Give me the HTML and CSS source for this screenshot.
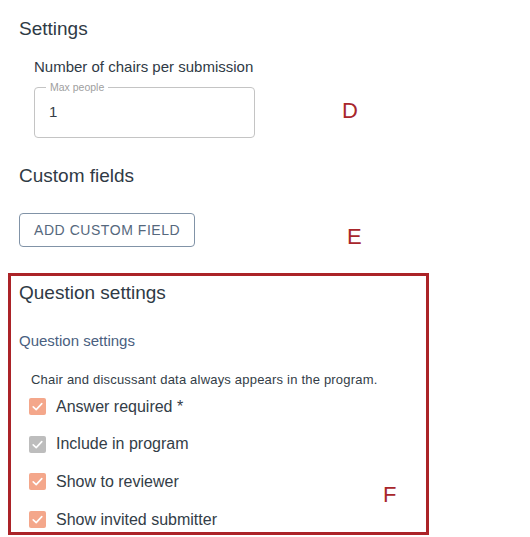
FILE: index.html
```html
<!DOCTYPE html>
<html lang="en">
<head>
<meta charset="utf-8">
<title>Settings</title>
<link rel="stylesheet" href="styles.css">
</head>
<body>
<div class="page">
  <section class="section">
    <h2 class="heading">Settings</h2>
    <div class="field-group">
      <div class="field-title">Number of chairs per submission</div>
      <div class="field-row">
        <div class="outlined">
          <span class="outlined-label">Max people</span>
          <div class="outlined-value">1</div>
        </div>
        <span class="marker marker-d">D</span>
      </div>
    </div>
  </section>

  <section class="section section-custom">
    <h2 class="heading">Custom fields</h2>
    <div class="button-row">
      <button class="btn-outline" type="button">ADD CUSTOM FIELD</button>
      <span class="marker marker-e">E</span>
    </div>
  </section>

  <section class="highlight">
    <h2 class="heading">Question settings</h2>
    <div class="subheading">Question settings</div>
    <p class="note">Chair and discussant data always appears in the program.</p>
    <ul class="checks">
      <li class="check-row">
        <span class="cb cb-orange"><svg viewBox="0 0 17 17" width="17" height="17"><path d="M4.2 8.8 L7.2 11.6 L12.8 5.6" fill="none" stroke="#fff" stroke-width="1.6" stroke-linecap="round" stroke-linejoin="round"/></svg></span>
        <span class="check-label">Answer required *</span>
      </li>
      <li class="check-row">
        <span class="cb cb-gray"><svg viewBox="0 0 17 17" width="17" height="17"><path d="M4.2 8.8 L7.2 11.6 L12.8 5.6" fill="none" stroke="#fff" stroke-width="1.6" stroke-linecap="round" stroke-linejoin="round"/></svg></span>
        <span class="check-label">Include in program</span>
      </li>
      <li class="check-row">
        <span class="cb cb-orange"><svg viewBox="0 0 17 17" width="17" height="17"><path d="M4.2 8.8 L7.2 11.6 L12.8 5.6" fill="none" stroke="#fff" stroke-width="1.6" stroke-linecap="round" stroke-linejoin="round"/></svg></span>
        <span class="check-label">Show to reviewer</span>
      </li>
      <li class="check-row">
        <span class="cb cb-orange"><svg viewBox="0 0 17 17" width="17" height="17"><path d="M4.2 8.8 L7.2 11.6 L12.8 5.6" fill="none" stroke="#fff" stroke-width="1.6" stroke-linecap="round" stroke-linejoin="round"/></svg></span>
        <span class="check-label">Show invited submitter</span>
      </li>
    </ul>
    <span class="marker marker-f">F</span>
  </section>
</div>
</body>
</html>
```

FILE: styles.css
```css
* { box-sizing: border-box; }

html, body {
  margin: 0;
  padding: 0;
  background: #ffffff;
}

body {
  font-family: "Liberation Sans", Arial, sans-serif;
  color: #333d47;
}

.page {
  width: 530px;
  padding: 17px 8px 0 8px;
}

.section {
  padding-left: 11px;
}

.heading {
  margin: 0;
  font-size: 19px;
  line-height: 24px;
  font-weight: 400;
  color: #2f3a45;
}

.field-group {
  margin-top: 16px;
  padding-left: 15px;
}

.field-title {
  font-size: 15px;
  line-height: 20px;
  color: #2f3a45;
}

.field-row {
  display: flex;
  align-items: flex-start;
  margin-top: 10px;
}

.outlined {
  position: relative;
  width: 221px;
  height: 51px;
  border: 1px solid #c4c4c4;
  border-radius: 4px;
  padding: 14px 14px 0 14px;
}

.outlined-label {
  position: absolute;
  left: 11px;
  top: -8px;
  padding: 0 4px;
  background: #ffffff;
  font-size: 10.5px;
  line-height: 14px;
  color: #a0a0a0;
}

.outlined-value {
  font-size: 15px;
  line-height: 20px;
  color: #333d47;
}

.marker {
  font-size: 22px;
  line-height: 26px;
  color: #a8262b;
}

.marker-d {
  margin-left: 87px;
  margin-top: 11px;
}

.section-custom {
  margin-top: 26px;
}

.button-row {
  display: flex;
  align-items: flex-start;
  height: 34px;
  margin-top: 25px;
}

.btn-outline {
  width: 176px;
  height: 34px;
  padding: 6px 0 6px 14px;
  text-align: left;
  border: 1px solid #8193a7;
  border-radius: 4px;
  background: #ffffff;
  font-family: "Liberation Sans", Arial, sans-serif;
  font-size: 14px;
  line-height: 20px;
  letter-spacing: 0.55px;
  color: #55687d;
  cursor: pointer;
}

.marker-e {
  margin-left: 152px;
  margin-top: 11px;
}

.highlight {
  position: relative;
  margin-top: 26px;
  width: 421px;
  height: 262px;
  border: 3px solid #ab2328;
  padding: 5px 8px 0 8px;
  overflow: hidden;
}

.subheading {
  margin-top: 26px;
  font-size: 15px;
  line-height: 20px;
  color: #4a6080;
}

.note {
  margin: 21px 0 0 12px;
  font-size: 13px;
  line-height: 16px;
  letter-spacing: 0.2px;
  color: #333d47;
}

.checks {
  list-style: none;
  margin: 0;
  padding: 0 0 0 10px;
}

.check-row {
  display: flex;
  align-items: center;
  height: 37.6px;
  gap: 10px;
}

.cb {
  display: block;
  width: 17px;
  height: 17px;
  border-radius: 2px;
}

.cb svg {
  display: block;
}

.cb-orange {
  background: #f4a78b;
}

.cb-gray {
  background: #bdbdbd;
}

.check-label {
  font-size: 16px;
  line-height: 20px;
  color: #333d47;
}

.marker-f {
  position: absolute;
  left: 372px;
  top: 206px;
}
```
